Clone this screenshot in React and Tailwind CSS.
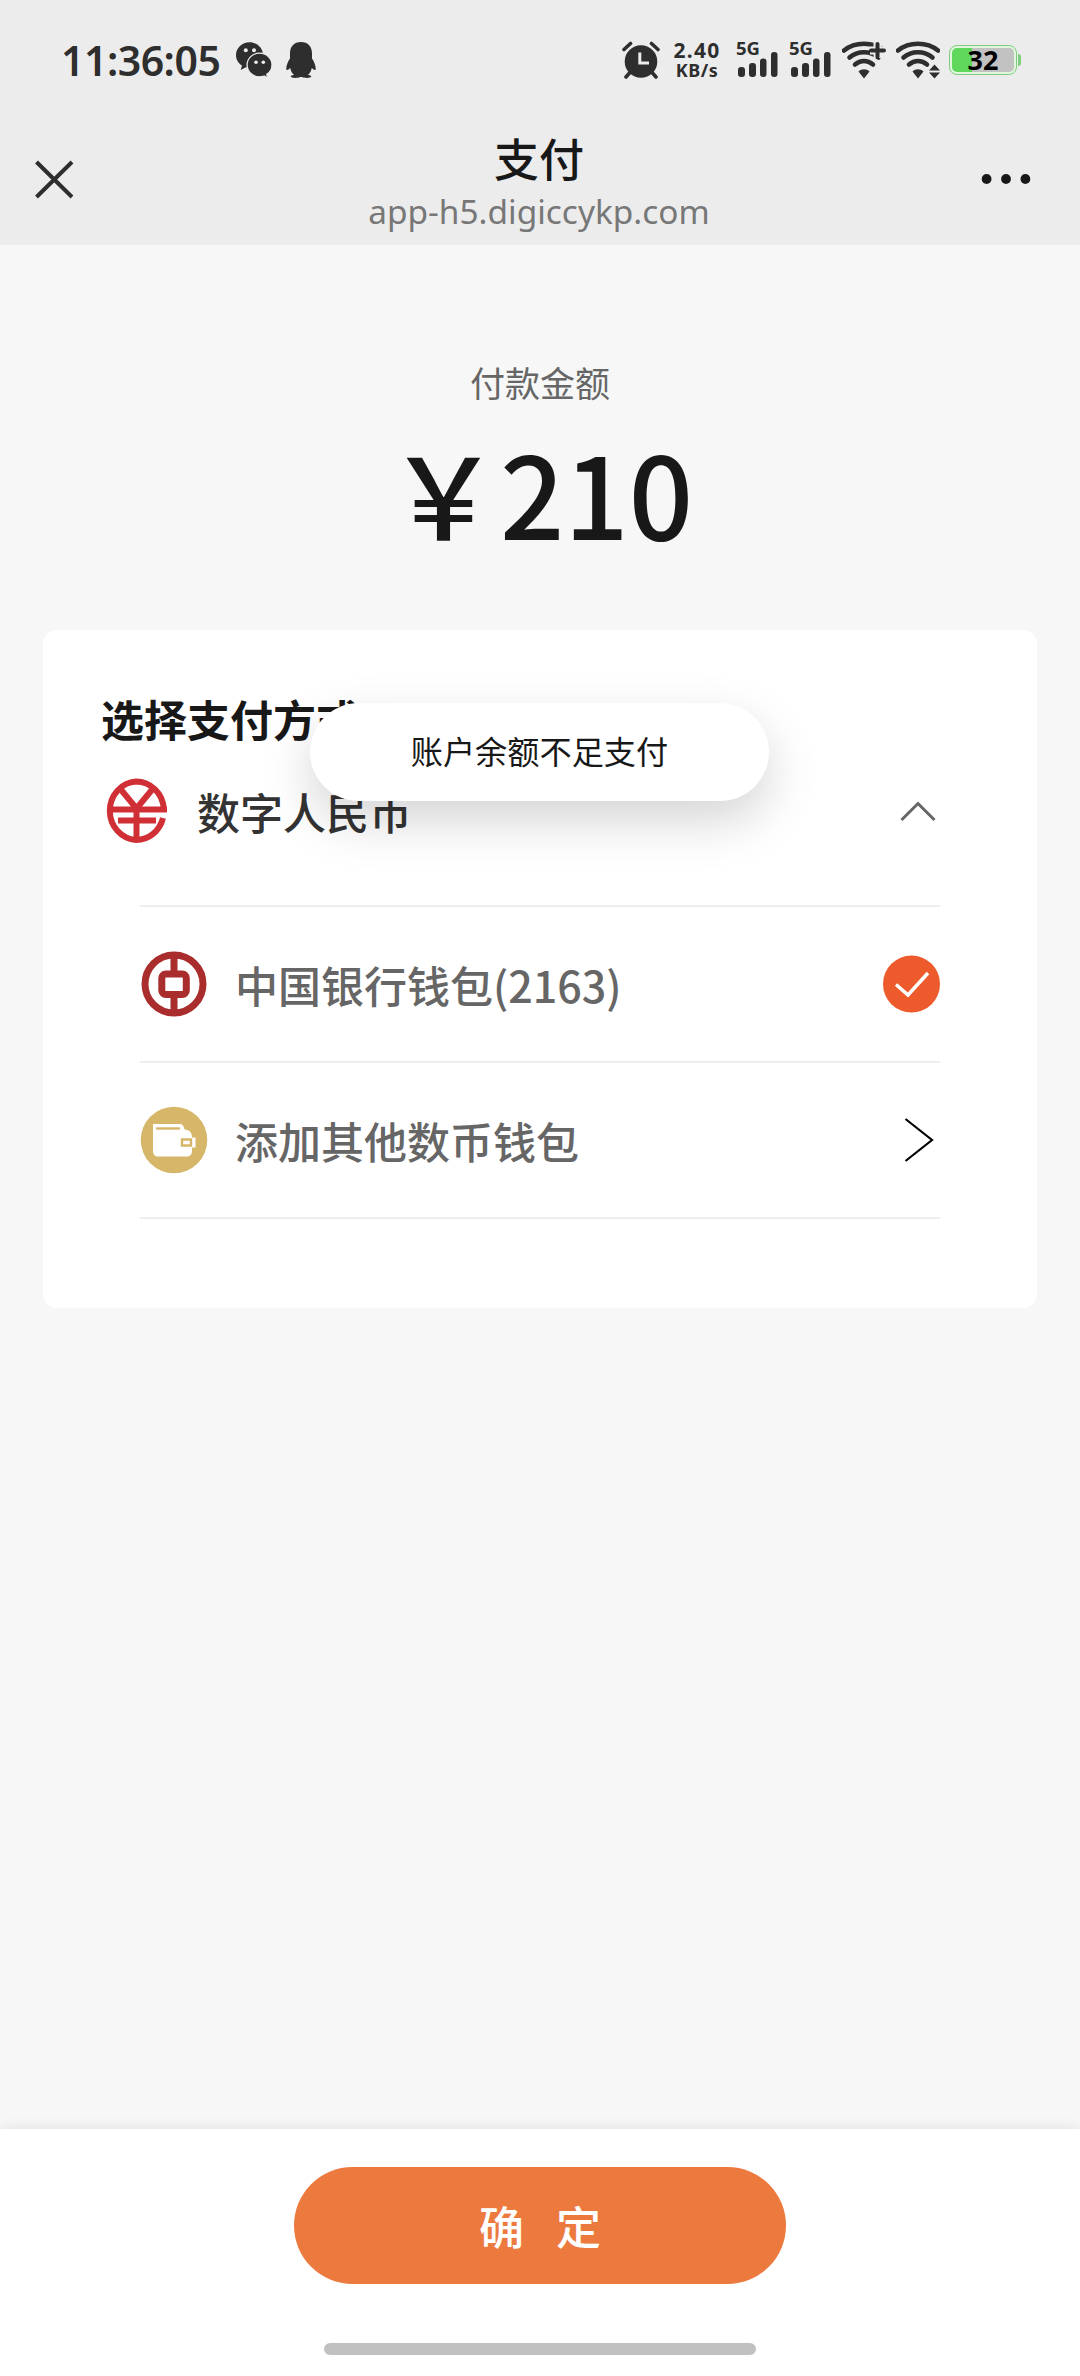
import React, { useState } from 'react';

const AlarmIcon = () => (
  <svg width="38" height="38" viewBox="0 0 38 38" fill="none" className="shrink-0">
    <circle cx="19" cy="20.5" r="16.3" fill="#2e2e2e" />
    <path d="M2 8.5 8.5 2.5M36 8.5 29.5 2.5M7.5 32 4 36M30.5 32 34 36" stroke="#2e2e2e" strokeWidth="3.6" strokeLinecap="round" />
    <path d="M17.8 11.5V22H27" stroke="#ececec" strokeWidth="3" />
  </svg>
);

const WechatIcon = () => (
  <svg width="36" height="36" viewBox="0 0 36 36" className="shrink-0">
    <path d="M13.5.2C6 .2 0 5.9 0 13c0 4.5 2.3 8.3 6 10.6L4.6 28l5.4-2.7c1.2.3 2.3.4 3.5.4 7.5 0 13.5-5.7 13.5-12.700S21 .2 13.500.2Z" fill="#2e2e2e" />
    <circle cx="9.8" cy="8.3" r="2" fill="#ececec" />
    <circle cx="18" cy="8.3" r="2" fill="#ececec" />
    <path d="M23.5 11.2c-7 0-12.4 5.2-12.4 11.7s5.4 11.9 12.4 11.9c1.7 0 3.2-.3 4.6-.8l3.4 2-.7-3.6c3.2-2.2 5.2-5.5 5.2-9.5 0-6.500-5.500-11.700-12.500-11.700Z" fill="#2e2e2e" stroke="#ececec" strokeWidth="1.3" />
    <circle cx="20" cy="20.3" r="1.8" fill="#ececec" />
    <circle cx="27.3" cy="20.3" r="1.8" fill="#ececec" />
  </svg>
);

const QQIcon = () => (
  <svg width="30" height="36" viewBox="0 0 30 36" fill="#2e2e2e" className="shrink-0">
    <path d="M15 0C8 0 4 4.500 4 11.500v5C2 19.500.300 23 .200 27.500c.600 1 2.200.500 4-1.500.600 3 1.800 5 3.800 7-2 .2-3.300.8-3.300 1.600 0 1.600 7.300 1.700 9.300.4h2c2 1.300 9.300 1.200 9.300-.4 0-.8-1.300-1.400-3.300-1.600 2-2 3.200-4 3.800-7 1.800 2 3.400 2.500 4 1.500-.1-4.500-1.800-8-3.800-11v-5C26 4.500 22 0 15 0Z" />
  </svg>
);

const Signal = () => (
  <div className="flex flex-col w-[42px] h-[38px] relative">
    <span className="text-[18.5px] leading-[14px] font-bold">5G</span>
    <svg width="40" height="26" viewBox="0 0 40 26" fill="#2e2e2e" className="absolute left-[2px] top-[11px]">
      <rect x="0" y="15" width="7" height="10" rx="3" />
      <rect x="11" y="11" width="7" height="14" rx="3" />
      <rect x="22" y="6.5" width="6.5" height="18.5" rx="3" />
      <rect x="33" y="0" width="6.5" height="25" rx="3" />
    </svg>
  </div>
);

const WifiArcs = () => (
  <>
    <path d="M2 9.5C13 .5 31 .5 42 9.5" stroke="#2e2e2e" strokeWidth="4.6" strokeLinecap="round" fill="none" />
    <path d="M7.5 16.5c8-7 21-7 29 0" stroke="#2e2e2e" strokeWidth="4.6" strokeLinecap="round" fill="none" />
    <path d="M13 23.5c5.5-4.5 12.5-4.5 18 0" stroke="#2e2e2e" strokeWidth="4.6" strokeLinecap="round" fill="none" />
    <path d="M16.5 30.5c3-3 8-3 11 0l-5.5 7Z" fill="#2e2e2e" />
  </>
);

const WifiPlusIcon = () => (
  <svg width="44" height="38" viewBox="0 0 44 38" className="shrink-0">
    <WifiArcs />
    <path d="M35.5 2v15M28 9.500h16" stroke="#ececec" strokeWidth="8" />
    <path d="M35.5 3v13M29 9.500h13" stroke="#2e2e2e" strokeWidth="4" strokeLinecap="round" />
  </svg>
);

const WifiIcon = () => (
  <svg width="44" height="38" viewBox="0 0 44 38" className="shrink-0">
    <WifiArcs />
    <path d="M33 29.5 38.5 23.5 44 29.5ZM33 31.5 38.5 37.5 44 31.5Z" fill="#2e2e2e" />
  </svg>
);

const Battery = () => (
  <div className="flex items-center">
    <div className="w-[68px] h-[30px] rounded-[8px] border-[1.5px] border-[#7ccf7c] bg-[#e2f5df] p-[2px]">
      <div className="h-full rounded-[5px] bg-linear-to-r from-[#5fd75a] from-32% to-[#c2c2c2] to-32% flex items-center justify-center">
        <span className="text-[27px] leading-[24px] font-bold text-black">32</span>
      </div>
    </div>
    <div className="w-[3px] h-[12px] ml-[1px] rounded-r-full bg-[#7ccf7c]" />
  </div>
);

const RmbIcon = () => (
  <svg width="62" height="66" viewBox="0 0 62 66" fill="none" stroke="#d02f35" strokeWidth="6" className="shrink-0">
    <path d="M57.8 31A27.800 29.300 0 0 0 30 3.500A27.800 29.300 0 0 0 30 62A27.800 29.300 0 0 0 57 40" />
    <path d="M14 10.500 30.500 30.500 47 10.500M30.500 28v33M3 31.500h58M12 42.500h38" />
  </svg>
);

const BocIcon = () => (
  <svg width="68" height="66" viewBox="0 0 68 66" fill="none" stroke="#a92d2c" className="shrink-0">
    <circle cx="34" cy="33" r="29" strokeWidth="7" />
    <rect x="21.8" y="23" width="24.5" height="20.5" rx="4" strokeWidth="7" />
    <path d="M34 5v17M34 45v17" strokeWidth="7" />
  </svg>
);

const WalletIcon = () => (
  <svg width="68" height="68" viewBox="0 0 68 68" className="shrink-0">
    <circle cx="34" cy="34" r="33.3" fill="#d6b76a" />
    <path d="M13 18h26c3.500 0 5 2 5.500 5.500 5 .3 7.500 3 7.500 8h3.500v10h-3.500v3.500c0 3.500-2 5.500-5.500 5.500h-28c-3.500 0-5.500-2-5.500-5.500Z" fill="#fff" />
    <path d="M16 22.5h24" stroke="#d6b76a" strokeWidth="2.4" />
    <path d="M42 33.500h9v6H42Z" fill="#fff" stroke="#d6b76a" strokeWidth="2.4" />
  </svg>
);

const StatusBar = () => (
  <div className="h-[120px] pt-[42px] pl-[61px] pr-[59px] flex items-start justify-between text-[#2e2e2e] font-['Noto_Sans']">
    <div className="flex items-center h-[36px]">
      <span className="w-[175px] text-[41px] leading-none font-semibold tracking-[-0.5px]">11:36:05</span>
      <WechatIcon />
      <div className="w-[14px]" />
      <QQIcon />
    </div>
    <div className="flex items-center h-[36px]">
      <AlarmIcon />
      <div className="w-[50px] ml-[12px] mr-[2px] flex flex-col items-center font-bold">
        <span className="text-[21px] leading-[20px] tracking-[1.3px]">2.40</span>
        <span className="text-[18px] leading-[20px] tracking-[0.5px]">KB/s</span>
      </div>
      <div className="flex ml-[12px] gap-[11px]">
        <Signal />
        <Signal />
      </div>
      <div className="flex ml-[11px] mr-[9px] gap-[10px]">
        <WifiPlusIcon />
        <WifiIcon />
      </div>
      <Battery />
    </div>
  </div>
);

const NavBar = () => (
  <div className="h-[125px] px-[34px] grid grid-cols-[1fr_auto_1fr] items-start">
    <svg width="40" height="40" viewBox="0 0 40 40" className="mt-[39px]">
      <path d="M2.5 3 38 38M38 3 2.5 38" stroke="#2e2e2e" strokeWidth="4" />
    </svg>
    <div className="flex flex-col items-center pt-[8px] pr-[2px]">
      <h1 className="text-[45px] leading-[60px] font-medium text-[#181818]">支付</h1>
      <p className="mt-[3px] text-[33.4px] leading-[40px] text-[#777] font-['Noto_Sans']">app-h5.digiccykp.com</p>
    </div>
    <svg width="50" height="12" viewBox="0 0 50 12" fill="#181818" className="mt-[53px] mr-[15px] justify-self-end">
      <circle cx="5.6" cy="6" r="4.9" />
      <circle cx="25" cy="6" r="4.9" />
      <circle cx="44.4" cy="6" r="4.9" />
    </svg>
  </div>
);

const Toast = ({ message }) => (
  <div className="absolute left-[310px] top-[703px] w-[459px] h-[98px] rounded-full bg-white flex items-center justify-center shadow-[0_20px_50px_rgba(0,0,0,0.17)]">
    <span className="-mt-[3px] text-[32.2px] leading-none text-[#181818]">{message}</span>
  </div>
);

const WalletRow = ({ icon, label, action, onClick }) => (
  <div onClick={onClick} className="h-[156px] flex items-center border-b-2 border-[#eeeeee]">
    {icon}
    <span className="flex-1 ml-[27px] text-[43px] leading-none font-medium text-[#666]">{label}</span>
    {action}
  </div>
);

function App() {
  const [open, setOpen] = useState(true);

  return (
    <div className="relative w-[1080px] h-[2376px] bg-[#f7f7f7] flex flex-col overflow-hidden font-['Noto_Sans_CJK_SC',sans-serif]">
      {/* Header */}
      <header className="bg-[#ececec]">
        <StatusBar />
        <NavBar />
      </header>

      {/* Amount */}
      <section className="h-[385px] pt-[112px] flex flex-col items-center">
        <p className="text-[35px] leading-[50px] text-[#666]">付款金额</p>
        <p className="mt-[9px] text-[113px] leading-[150px] font-medium text-[#181818]">{'\uffe5'}210</p>
      </section>

      {/* Payment methods */}
      <section className="mx-[43px] h-[678px] px-[58px] pt-[58px] rounded-[14px] bg-white">
        <h2 className="text-[43px] leading-[60px] font-bold text-[#181818]">选择支付方式</h2>
        <div onClick={() => setOpen(!open)} className="mt-[2px] h-[122px] pl-[5px] pr-[43px] flex items-center">
          <RmbIcon />
          <span className="flex-1 ml-[29px] text-[43px] leading-none font-medium text-[#333]">数字人民币</span>
          <svg width="36" height="22" viewBox="0 0 36 22" fill="none">
            <path d="M1.5 20 18 3.5 34.5 20" stroke="#666" strokeWidth="3" />
          </svg>
        </div>
        {open && (
          <div className="ml-[39px] mr-[39px] mt-[33px] border-t-2 border-[#eeeeee]">
            <WalletRow
              icon={<BocIcon />}
              label="中国银行钱包(2163)"
              action={
                <svg width="58" height="58" viewBox="0 0 58 58" fill="none">
                  <circle cx="29.5" cy="29" r="28.5" fill="#ed5a2b" />
                  <path d="M14 29.5 26 40 46 18" stroke="#fff" strokeWidth="3.6" />
                </svg>
              }
            />
            <WalletRow
              icon={<WalletIcon />}
              label="添加其他数币钱包"
              action={
                <svg width="30" height="46" viewBox="0 0 30 46" fill="none" className="mr-[6px]">
                  <path d="M1.5 2 28 23 1.5 44" stroke="#000" strokeWidth="2.2" />
                </svg>
              }
            />
          </div>
        )}
      </section>

      {/* Confirm */}
      <footer className="mt-auto h-[247px] pt-[38px] bg-white flex flex-col items-center shadow-[0_-2px_12px_rgba(0,0,0,0.08)]">
        <button className="w-[492px] h-[117px] rounded-full bg-[#ec7a3f] text-white text-[45px] leading-none font-medium flex items-center justify-center gap-[32px]">
          <span>确</span>
          <span>定</span>
        </button>
        <div className="mt-[59px] w-[432px] h-[12px] rounded-full bg-[#c1c1c1]" />
      </footer>

      <Toast message="账户余额不足支付" />
    </div>
  );
}

export default App;
